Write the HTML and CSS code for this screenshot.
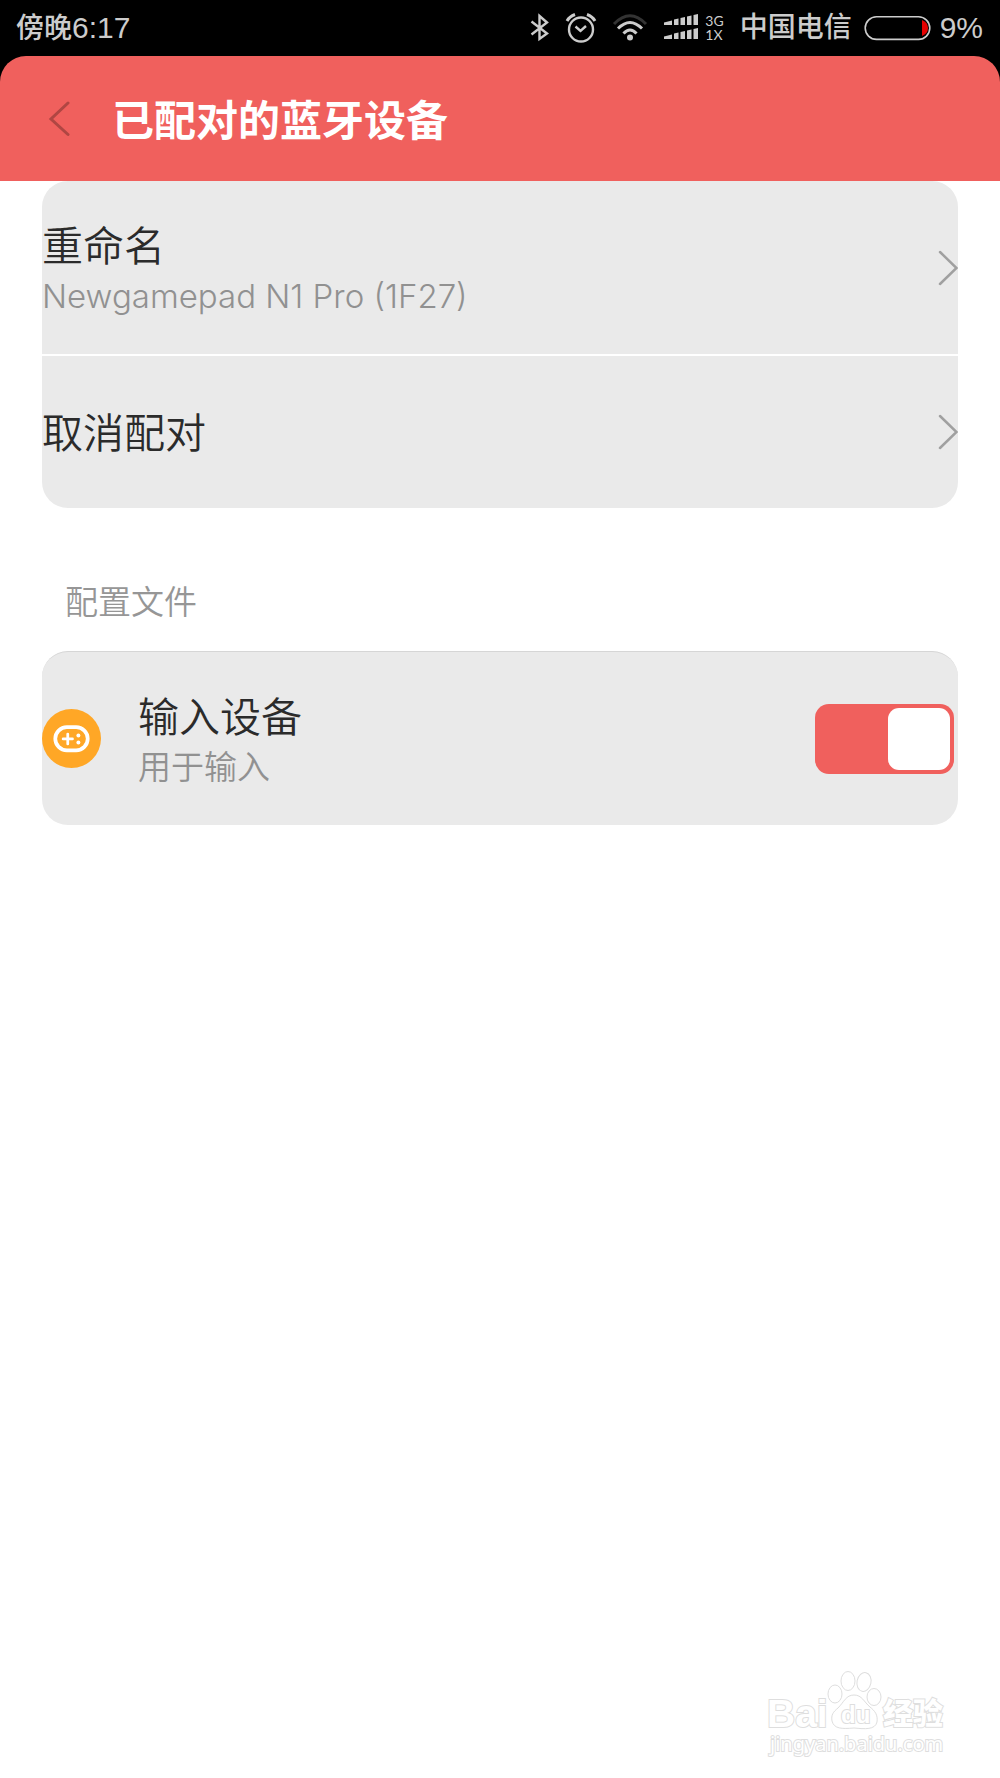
FILE: index.html
```html
<!DOCTYPE html>
<html lang="zh-CN">
<head>
<meta charset="utf-8">
<meta name="viewport" content="width=device-width, initial-scale=1">
<title>已配对的蓝牙设备</title>
<link rel="stylesheet" href="styles.css">
</head>
<body>
<div class="top">
  <div class="status-bar">
    <span class="status-time">傍晚<span class="digits">6:17</span></span>
    <div class="status-icons">
      <svg class="icon-bluetooth" width="20" height="30" viewBox="0 0 20 30" fill="none" stroke="currentColor" stroke-width="2.4" aria-hidden="true"><path d="M1.500 8.500L17 20.500L9.500 26V3L17 9.500L1.500 21.500"/></svg>
      <svg class="icon-alarm" width="32" height="30" viewBox="0 0 32 30" fill="none" stroke="currentColor" stroke-width="2.400" aria-hidden="true"><circle cx="16" cy="16.500" r="12"/><path d="M10.500 13.500L15.500 18L21 13"/><path d="M2 8Q4.500 3.500 10 1.500M22 1.500Q27.500 3.500 30 8" stroke-width="3"/></svg>
      <svg class="icon-wifi" width="36" height="30" viewBox="0 0 36 30" fill="none" stroke="currentColor" stroke-width="3" aria-hidden="true"><path d="M2 11Q18 -5.500 34 11" stroke="#333"/><path d="M6 15.500Q18 3.500 30 15.500M11.500 20.500Q18 13.500 24.500 20.500"/><circle cx="18" cy="24.500" r="3" fill="currentColor" stroke="none"/></svg>
      <svg class="icon-signal" width="36" height="30" viewBox="0 0 36 30" fill="currentColor" aria-hidden="true"><path id="bars" d="M1 9.500L9 7.500V12H1ZM11 6.500L15.500 5.500V12H11ZM17.500 5L22 4V12H17.500ZM24 3.500L28.500 2.500V12H24ZM30.500 2L35 1V12H30.500Z"/><use href="#bars" y="14"/></svg>
      <span class="network"><span>3G</span><span>1X</span></span>
      <span class="carrier">中国电信</span>
      <svg class="icon-battery" width="68" height="26" viewBox="0 0 68 26" fill="none" aria-hidden="true"><rect x="1.200" y="1.800" width="64.600" height="22.600" rx="11.300" stroke="#ccc" stroke-width="1.600"/><path d="M58 5Q64 7.500 64 13T58 21Z" fill="#e60000"/></svg>
      <span class="digits">9%</span>
    </div>
  </div>

  <header class="title-bar">
    <button class="back" type="button" aria-label="返回">
      <svg width="22" height="38" viewBox="0 0 22 38" fill="none" stroke="currentColor" stroke-width="3" stroke-linecap="round" aria-hidden="true"><path d="M20 3L3 19L20 34.500"/></svg>
    </button>
    <h1 class="title">已配对的蓝牙设备</h1>
  </header>
</div>

<main class="content">
  <div class="card">
    <button class="row" type="button">
      <span class="row-text">
        <span class="row-title">重命名</span>
        <span class="row-note"><span class="latin">Newgamepad N1 Pro (1F27)</span></span>
      </span>
      <svg class="chevron" width="20" height="36" viewBox="0 0 20 36" aria-hidden="true"><path d="M2 2L18.500 18L2 34"/></svg>
    </button>
    <button class="row row-short" type="button">
      <span class="row-text"><span class="row-title">取消配对</span></span>
      <svg class="chevron" width="20" height="36" viewBox="0 0 20 36" aria-hidden="true"><path d="M2 2L18.500 18L2 34"/></svg>
    </button>
  </div>

  <h2 class="section-title">配置文件</h2>

  <div class="card card-lined">
    <label class="row" for="input-device">
      <svg class="device-icon" width="59" height="59" viewBox="0 0 60 60" aria-hidden="true"><circle cx="30" cy="30" r="30" fill="#ffa726"/><rect x="13.500" y="18.500" width="33" height="23.500" rx="11.750" fill="none" stroke="#fff" stroke-width="3.800"/><path d="M21.500 30.500H31M26.200 25.500V35.500" stroke="#fff" stroke-width="2.800" stroke-linecap="round"/><circle cx="37" cy="27" r="2" fill="#fff"/><circle cx="37" cy="34" r="2" fill="#fff"/></svg>
      <span class="row-text">
        <span class="row-title">输入设备</span>
        <span class="row-note">用于输入</span>
      </span>
      <input class="switch" id="input-device" type="checkbox" role="switch" checked>
    </label>
  </div>
</main>

<footer class="watermark">
  <svg width="188" height="92" viewBox="0 0 188 92" role="img" aria-label="Baidu 经验 jingyan.baidu.com">
    <g class="mark">
      <text class="mark-name" x="5" y="59">Bai</text>
      <ellipse cx="73" cy="26" rx="7" ry="9"/>
      <ellipse cx="86" cy="13" rx="7" ry="9.500"/>
      <ellipse cx="102" cy="14" rx="7" ry="9.500" transform="rotate(12 102 14)"/>
      <ellipse cx="112" cy="29" rx="7" ry="8.500"/>
      <path d="M92 27C84 27 82 34 76 40C71 44 69 47 70 53C72 61 80 61 92 60C103 61 113 62 115 54C116 47 113 43 108 39C102 34 100 27 92 27Z"/>
      <text class="mark-du" x="79" y="55">du</text>
      <text class="mark-cjk" x="121" y="56">经验</text>
      <text class="mark-url" x="8" y="83">jingyan.baidu.com</text>
    </g>
  </svg>
</footer>
</body>
</html>
```
FILE: styles.css
```css
* {
  box-sizing: border-box;
}

body {
  margin: 0;
  min-height: 100vh;
  display: flex;
  flex-direction: column;
  background: #fff;
  color: #2b2b2b;
  font-family: "Noto Sans CJK SC", sans-serif;
}

button {
  border: 0;
  padding: 0;
  background: none;
  color: inherit;
  font: inherit;
  text-align: left;
}

svg {
  display: block;
  flex: none;
}

/* Status bar */
.top {
  background: #000;
}

.status-bar {
  display: flex;
  justify-content: space-between;
  align-items: center;
  height: 56px;
  padding: 0 17px 0 16px;
  color: #ccc;
  font-family: "Liberation Sans", "Noto Sans CJK SC", sans-serif;
  font-size: 28px;
  line-height: 32px;
}

.status-time,
.carrier {
  font-weight: 500;
}

.digits {
  font-size: 30px;
}

.status-icons {
  display: flex;
  align-items: center;
}

.icon-alarm,
.icon-wifi,
.icon-signal {
  margin-left: 15px;
}

.network {
  display: flex;
  flex-direction: column;
  margin: 0 16px 0 6px;
  font-family: Lato, sans-serif;
  font-size: 14px;
  line-height: 14px;
}

.icon-battery {
  margin: 0 8px 0 12px;
}

/* Title bar */
.title-bar {
  display: flex;
  align-items: center;
  height: 125px;
  padding: 0 48px;
  border-radius: 26px 26px 0 0;
  background: #f0605d;
  color: #fff;
}

.back {
  color: #b04643;
}

.title {
  margin: 0 0 0 42px;
  padding-bottom: 2px;
  font-size: 42px;
  font-weight: 700;
  line-height: 56px;
}

/* Settings */
.content {
  flex: 1;
  padding: 0 42px;
}

.card {
  overflow: hidden;
  border-radius: 26px;
  background: #eaeaea;
}

.card-lined {
  border-top: 1px solid #d6d6d6;
}

.row {
  display: flex;
  align-items: center;
  width: 100%;
  min-height: 173px;
}

.row + .row {
  border-top: 2px solid #fff;
}

.row-short {
  min-height: 154px;
}

.row-text {
  flex: 1;
  display: flex;
  flex-direction: column;
}

.row-short .row-text {
  padding-bottom: 4px;
}

.row-title {
  font-size: 41px;
  font-weight: 350;
  line-height: 52px;
}

.row-note {
  color: #919191;
  font-size: 33px;
  font-weight: 350;
  line-height: 50px;
}

.latin {
  font-family: Inter, sans-serif;
  font-weight: 300;
  line-height: 1;
}

.chevron {
  fill: none;
  stroke: #a0a0a0;
  stroke-width: 2.5px;
  stroke-linecap: round;
}

.section-title {
  margin: 0;
  padding: 68px 23px 27px;
  color: #969696;
  font-size: 33px;
  font-weight: 350;
  line-height: 48px;
}

.device-icon {
  margin-right: 37px;
}

.switch {
  appearance: none;
  display: flex;
  width: 139px;
  height: 70px;
  margin: 0 4px 0 0;
  padding: 4px;
  border-radius: 14px;
  background: #c4c4c4;
}

.switch::before {
  content: "";
  width: 62px;
  height: 62px;
  border-radius: 11px;
  background: #fff;
}

.switch:checked {
  justify-content: flex-end;
  background: #f0605d;
}

/* Watermark */
.watermark {
  display: flex;
  justify-content: flex-end;
  padding: 0 50px 18px;
}

.mark {
  fill: #fff;
  stroke: #dedede;
  stroke-width: 1px;
}

.mark text {
  paint-order: stroke;
  stroke-width: 2px;
}

.mark-name {
  font: 700 39px "Liberation Sans", sans-serif;
}

.mark-du {
  font: 700 24px "Liberation Sans", sans-serif;
}

.mark-cjk {
  font: 900 30px "Noto Sans CJK SC", sans-serif;
}

.mark-url {
  font: 400 20px "Noto Sans", sans-serif;
}
```
